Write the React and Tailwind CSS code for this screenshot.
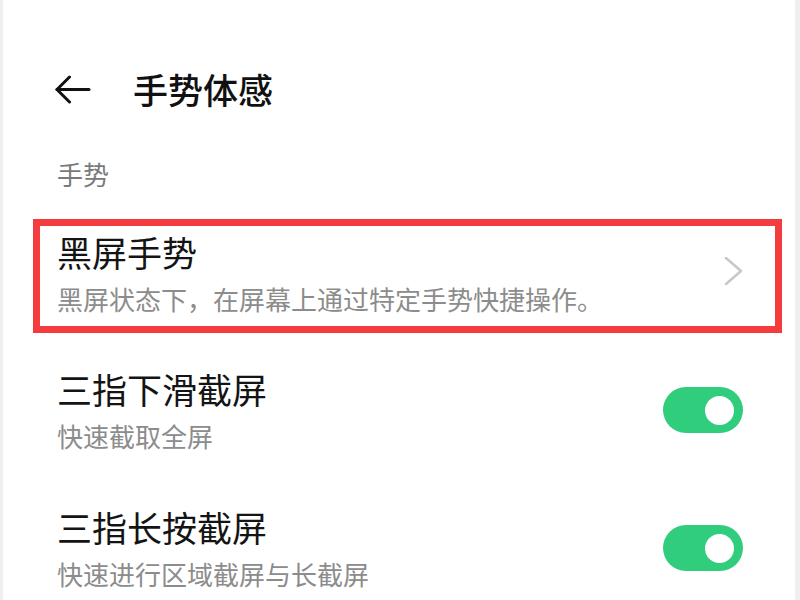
const font = { fontFamily: '"Noto Sans CJK SC", "Noto Sans", sans-serif' }

function Toggle() {
  return (
    <div className="w-[80px] h-[46px] rounded-full bg-[#2fcd7c] flex items-center justify-end pr-[9px] shrink-0">
      <div className="w-[29px] h-[29px] rounded-full bg-white" />
    </div>
  )
}

function SwitchRow({ title, desc }) {
  return (
    <div className="flex items-center pl-[54px] pr-[52px] pt-9 pb-5">
      <div className="flex-1">
        <div className="text-[35px] leading-[40px] text-[#141414]">{title}</div>
        <div className="mt-3 text-[26px] leading-[30px] text-[#8c8c8c]">{desc}</div>
      </div>
      <Toggle />
    </div>
  )
}

export default function App() {
  return (
    <div className="w-[800px] h-[600px] bg-white flex overflow-hidden" style={font}>
      <div className="w-[3px] bg-[#efefef]" />
      <div className="flex-1 flex flex-col">
        <div className="h-[2px] flex">
          <div className="ml-[202px] w-[20px] bg-[#c9bcc6]" />
          <div className="ml-[17px] w-[21px] bg-[#b4e6cf]" />
          <div className="ml-[19px] w-[20px] bg-[#b6d3f5]" />
        </div>

        <div className="mt-[69px] flex items-center pl-[51px]">
          <svg width="37" height="29" viewBox="0 0 37 29" fill="none" stroke="#111" strokeWidth="3" strokeLinecap="round" strokeLinejoin="round">
            <path d="M3 14.5H35" />
            <path d="M15.5 2L3 14.5L15.5 27" />
          </svg>
          <div className="ml-[42px] text-[35px] leading-[40px] font-medium text-[#111]">手势体感</div>
        </div>

        <div className="mt-[50px] pl-[54px] text-[26px] leading-[30px] text-[#7a7a7a]">手势</div>

        <div className="mt-[30px] ml-[30px] mr-[13px] border-[7px] border-[#f43b3e] flex items-center pl-[17px] pr-[32px] pt-[6px] pb-[12px]">
          <div className="flex-1">
            <div className="text-[35px] leading-[40px] text-[#141414]">黑屏手势</div>
            <div className="mt-3 text-[26px] leading-[30px] text-[#8c8c8c]">黑屏状态下，在屏幕上通过特定手势快捷操作。</div>
          </div>
          <svg width="19" height="30" viewBox="0 0 19 30" fill="none" stroke="#c8c8c8" strokeWidth="2.5" strokeLinecap="round" strokeLinejoin="round" className="mb-[4px]">
            <path d="M2 2L17 15L2 28" />
          </svg>
        </div>

        <SwitchRow title="三指下滑截屏" desc="快速截取全屏" />
        <SwitchRow title="三指长按截屏" desc="快速进行区域截屏与长截屏" />
      </div>
      <div className="w-[5px] bg-[#efefef]" />
    </div>
  )
}
